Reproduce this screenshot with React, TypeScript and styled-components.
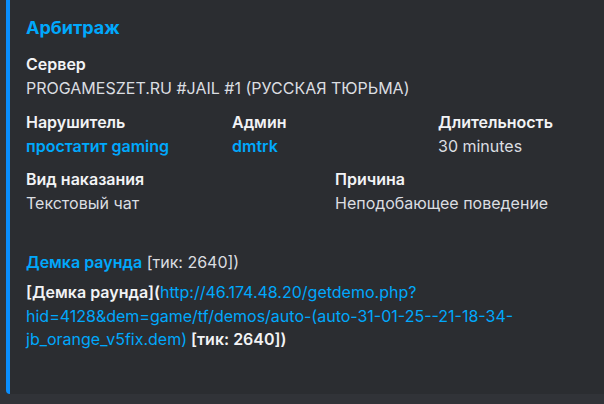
import React from "react";
import styled, { createGlobalStyle } from "styled-components";

const Global = createGlobalStyle`
  html, body {
    margin: 0;
    padding: 0;
    background: #313338;
  }
  body {
    font-family: Inter, "Noto Sans", sans-serif;
    -webkit-font-smoothing: antialiased;
  }
`;

const Page = styled.div`
  width: 604px;
  height: 404px;
  overflow: hidden;
  padding-left: 6px;
  box-sizing: border-box;
`;

const Embed = styled.div`
  width: 640px;
  height: 394px;
  box-sizing: border-box;
  background: #2b2d31;
  border-left: 4px solid #0a8fff;
  border-radius: 0 0 4px 4px;
  padding: 15px 16px 16px 16px;
  display: flex;
  flex-direction: column;
`;

const Title = styled.div`
  color: #00a8fc;
  font-size: 18px;
  font-weight: 700;
  line-height: 26px;
  margin-bottom: 13px;
`;

const Fields = styled.div`
  display: grid;
  grid-template-columns: repeat(12, 1fr);
  column-gap: 8px;
  row-gap: 12.5px;
  width: 610px;
`;

const Field = styled.div<{ $span: number }>`
  grid-column: span ${(p) => p.$span};
  display: flex;
  flex-direction: column;
  gap: 3px;
`;

const FieldName = styled.div`
  color: #f2f3f5;
  font-size: 16px;
  font-weight: 600;
  line-height: 21px;
`;

const FieldValue = styled.div<{ $link?: boolean }>`
  color: ${(p) => (p.$link ? "#00a8fc" : "#dbdee1")};
  font-size: 16px;
  font-weight: ${(p) => (p.$link ? 600 : 400)};
  line-height: 21px;
  white-space: nowrap;
`;

const Line = styled.div`
  margin-top: 38px;
  color: #dbdee1;
  font-size: 16px;
  line-height: 21px;
`;

const Desc = styled.div`
  margin-top: 8px;
  color: #f2f3f5;
  font-size: 16px;
  font-weight: 600;
  line-height: 23.5px;
  white-space: nowrap;
`;

const Link = styled.span<{ $bold?: boolean }>`
  color: #00a8fc;
  font-weight: ${(p) => (p.$bold ? 600 : 400)};
`;

export default function App() {
  return (
    <Page>
      <Global />
      <Embed>
        <Title>Арбитраж</Title>
        <Fields>
          <Field $span={12}>
            <FieldName>Сервер</FieldName>
            <FieldValue>PROGAMESZET.RU #JAIL #1 (РУССКАЯ ТЮРЬМА)</FieldValue>
          </Field>
          <Field $span={4}>
            <FieldName>Нарушитель</FieldName>
            <FieldValue $link>простатит gaming</FieldValue>
          </Field>
          <Field $span={4}>
            <FieldName>Админ</FieldName>
            <FieldValue $link>dmtrk</FieldValue>
          </Field>
          <Field $span={4}>
            <FieldName>Длительность</FieldName>
            <FieldValue>30 minutes</FieldValue>
          </Field>
          <Field $span={6}>
            <FieldName>Вид наказания</FieldName>
            <FieldValue>Текстовый чат</FieldValue>
          </Field>
          <Field $span={6}>
            <FieldName>Причина</FieldName>
            <FieldValue>Неподобающее поведение</FieldValue>
          </Field>
        </Fields>
        <Line>
          <Link $bold>Демка раунда</Link> [тик: 2640])
        </Line>
        <Desc>
          [Демка раунда](
          <Link>
            http://46.174.48.20/getdemo.php?
            <br />
            hid=4128&amp;dem=game/tf/demos/auto-(auto-31-01-25--21-18-34-
            <br />
            jb_orange_v5fix.dem)
          </Link>{" "}
          [тик: 2640])
        </Desc>
      </Embed>
    </Page>
  );
}
